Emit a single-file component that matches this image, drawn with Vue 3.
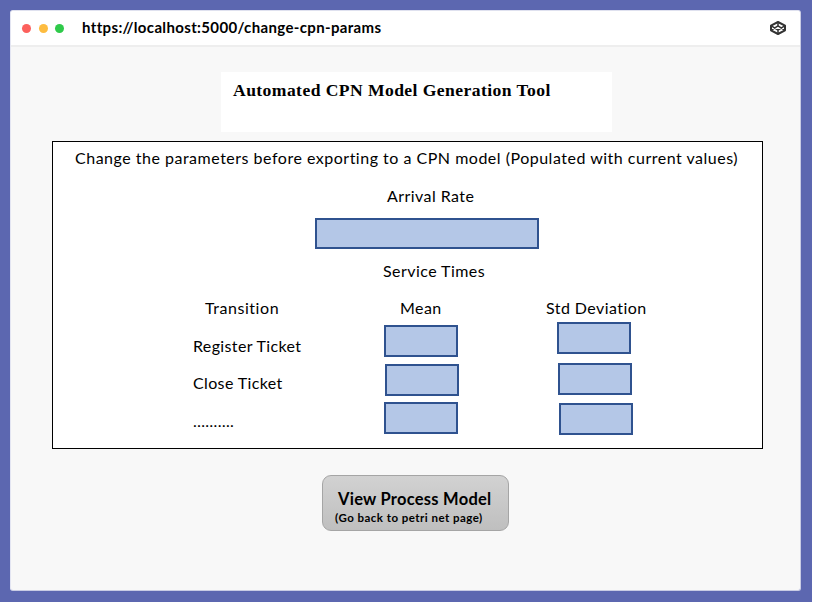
<script setup>
const names = ['Register Ticket', 'Close Ticket', '……….']
</script>

<template>
  <div class="desktop">
    <main class="window">
      <header class="bar">
        <div class="dots"><i class="dot red"></i><i class="dot amber"></i><i class="dot green"></i></div>
        <span class="url">https://localhost:5000/change-cpn-params</span>
        <svg class="logo" viewBox="0 0 16 14" width="16" height="14">
          <path class="outline" d="M8 1 15 4.700v4.600L8 13 1 9.300V4.700Z" />
          <path class="ribs" d="M8 1v3.900M8 9.100V13M1 4.700l7 4.500 7-4.500M1 9.300l7-4.500 7 4.500" />
        </svg>
      </header>
      <section class="body">
        <h1 class="title"><span>Automated CPN Model Generation Tool</span></h1>
        <form class="panel" @submit.prevent>
          <p class="line intro"><span>Change the parameters before exporting to a CPN model (Populated with current values)</span></p>
          <p class="line arrival">Arrival Rate</p>
          <div class="box rate"></div>
          <p class="line service">Service Times</p>
          <div class="table">
            <div class="col transitions">
              <p class="line head">Transition</p>
              <p v-for="n in names" :key="n" class="line name">{{ n }}</p>
            </div>
            <div class="col mean">
              <p class="line head">Mean</p>
              <div class="box"></div>
              <div class="box shifted"></div>
              <div class="box"></div>
            </div>
            <div class="col deviation">
              <p class="line head">Std Deviation</p>
              <div class="box"></div>
              <div class="box"></div>
              <div class="box"></div>
            </div>
          </div>
        </form>
        <button class="view" type="button">
          <span class="view-title">View Process Model</span>
          <span class="view-note">(Go back to petri net page)</span>
        </button>
      </section>
    </main>
  </div>
</template>

<style>
body { margin: 0; background: #fff; overflow: hidden; }
</style>

<style scoped>
* { box-sizing: border-box; }
p, h1 { margin: 0; }
.desktop {
  width: 812px; height: 602px; padding: 10px 11px 11px 10px;
  background: #5c67b0; color: #000;
  font-family: Lato, "Open Sans", sans-serif;
}
.window {
  height: 581px; border-radius: 3px; overflow: hidden;
  background: #f8f8f8; border: 1px solid #c9cce4; border-left-color: #e3e5f2; border-top-color: #dfe1ef;
}
.bar {
  display: flex; align-items: center; height: 36px; padding: 0 14px 0 11px;
  background: #fff; border-bottom: 2px solid #eee;
}
.dots { display: flex; gap: 7.500px; width: 60px; }
.dot { width: 9px; height: 9px; border-radius: 50%; }
.red { background: #fc605c; }
.amber { background: #fdbc40; }
.green { background: #2fca4a; }
.url { margin-bottom: 2px; font-size: 15px; font-weight: 700; line-height: 20px; white-space: nowrap; letter-spacing: .35px; }
.logo { margin-left: auto; fill: none; stroke: #333; stroke-linejoin: round; }
.outline { stroke-width: 2; }
.ribs { stroke-width: 1.500; }
.body { display: flex; flex-direction: column; align-items: flex-start; padding: 25px 0 0 41px; }
.title {
  width: 391px; height: 60px; margin-left: 169px; padding: 8px 0 0 12px;
  background: #fff; font: 700 17.600px/20px "Liberation Serif", serif; white-space: nowrap; letter-spacing: .42px;
}
.panel {
  display: flex; flex-direction: column; width: 711px; height: 308px; margin-top: 9px;
  background: #fff; border: 1px solid #000;
}
.line { font-size: 16px; line-height: 20px; height: 20px; white-space: nowrap; letter-spacing: .44px; }
.intro { margin: 6px 0 0 22px; letter-spacing: .505px; }
.arrival { margin: 18px 0 0 334px; }
.service { margin: 12px 0 0 330px; }
.name { letter-spacing: .36px; }
.box { width: 74px; height: 32px; background: #b4c7e7; border: 2px solid #2f528f; }
.rate { width: 224px; height: 31px; margin: 12px 0 0 262px; }
.table { display: flex; margin: 17px 0 0 140px; }
.col { display: flex; flex-direction: column; }
.transitions { width: 191px; gap: 17.500px; }
.transitions .head { margin-left: 12px; letter-spacing: .55px; }
.mean { width: 173px; }
.mean .head { margin: 0 0 7px 16px; }
.mean .box + .box { margin-top: 6px; }
.mean .shifted.shifted { margin: 7px 0 0 1px; }
.deviation .head { margin: 0 0 4px -11px; }
.deviation .box + .box { margin: 9px 0 0 1px; }
.deviation .box + .box + .box { margin: 8px 0 0 2px; }
.view {
  display: flex; flex-direction: column; align-items: flex-start;
  width: 187px; height: 56px; margin: 26px 0 0 270px; padding: 12px 0 0 12px;
  border: 1px solid #a5a5a5; border-radius: 9px; color: #000;
  background: linear-gradient(#d2d2d2, #bfbfbf); font-family: inherit; font-weight: 700; white-space: nowrap;
}
.view-title { margin-left: 3px; font-size: 16.500px; line-height: 22px; letter-spacing: .25px; }
.view-note { font-size: 11.500px; line-height: 16px; letter-spacing: .47px; }
</style>
